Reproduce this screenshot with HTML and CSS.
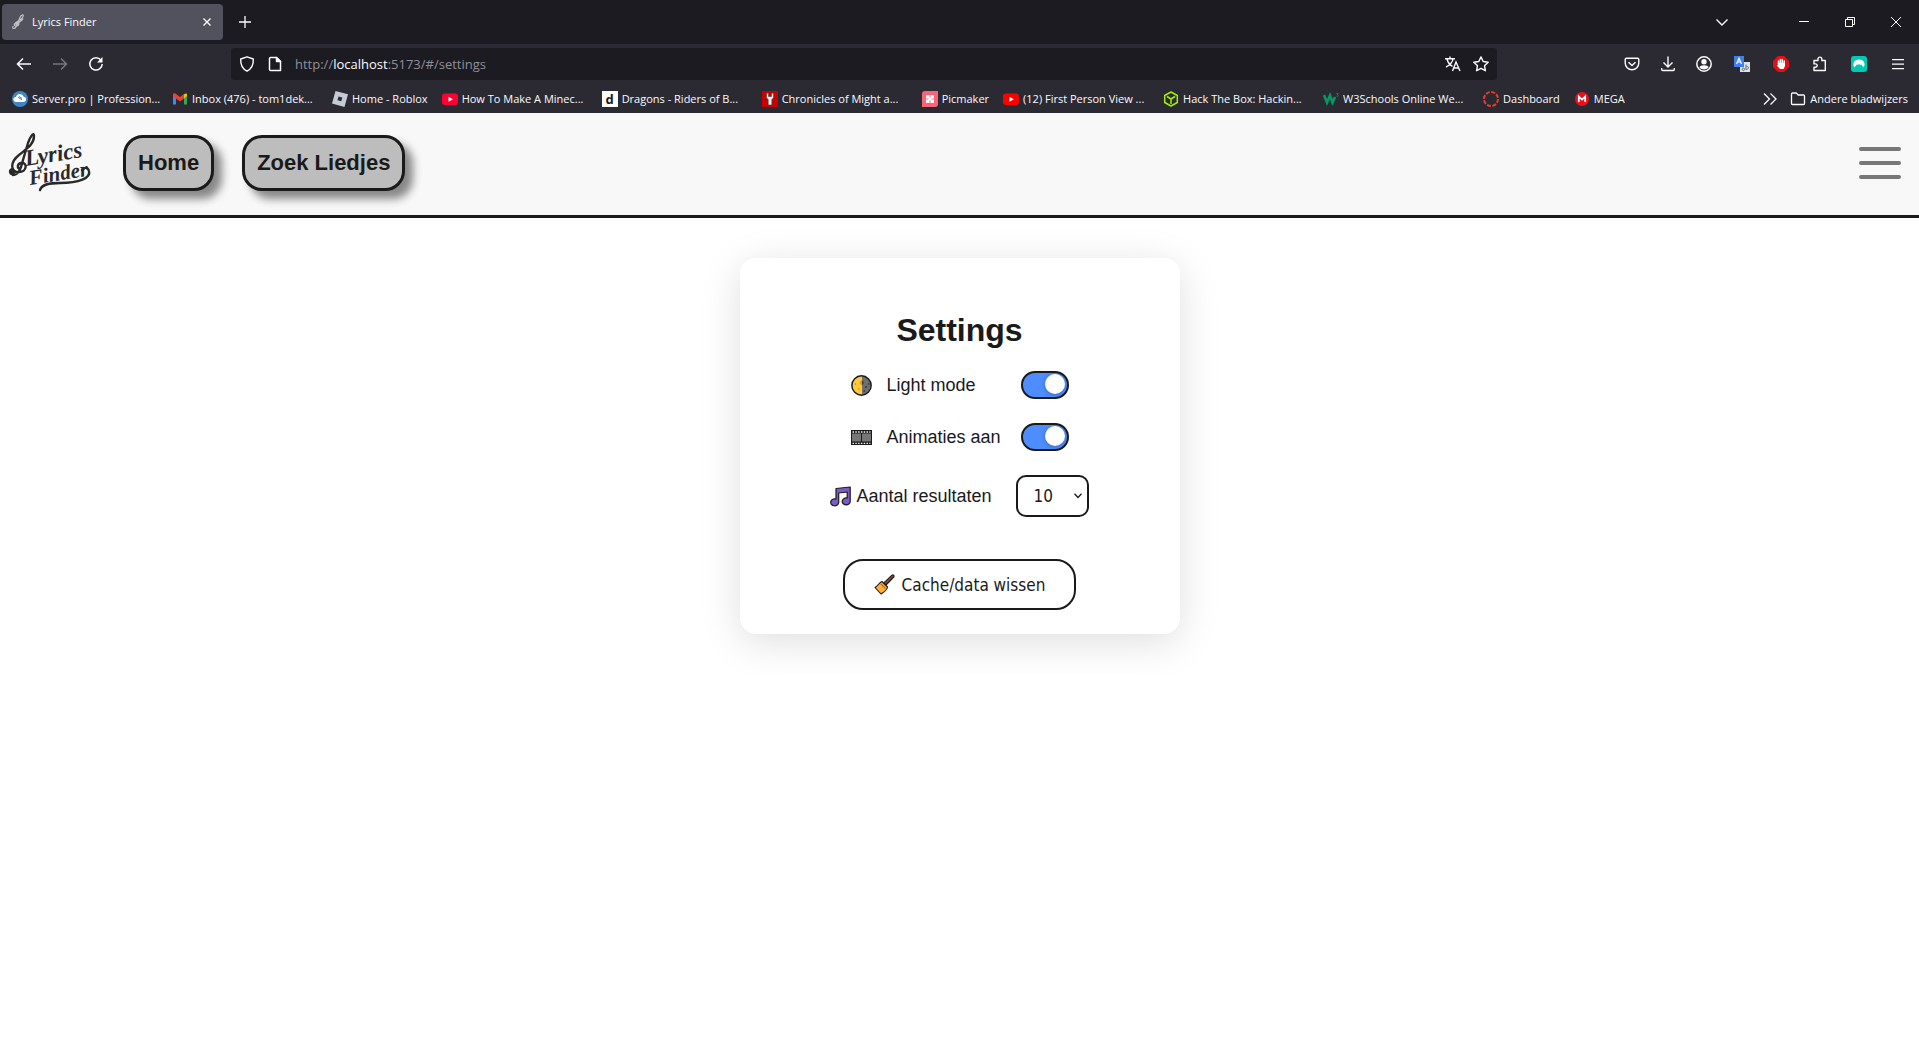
FILE: index.html
```html
<!DOCTYPE html>
<html lang="nl">
<head>
<meta charset="utf-8">
<meta name="viewport" content="width=device-width, initial-scale=1">
<title>Lyrics Finder</title>
<link rel="stylesheet" href="styles.css">
</head>
<body>
<div class="browser">
  <div class="tabbar">
    <div class="tab">
      <svg width="16" height="16" viewBox="0 0 16 16" fill="none" stroke="#c4c4c8" stroke-width="1.2"><path d="M3 14.500c-1.500 0-1.800-1.800-.5-2.200M3 14.500c2-.3 2.500-2 3.500-5L9 3.500c1-2.500 3.500-3.500 3.200-1.500C12 4 9 6 6.500 7.500 3 9.500 2.500 11.500 4.500 12c3 .5 4.500-3 2.500-3.500S4 11 6 11M12 4.500C11 7 8 8 7 9"/></svg>
      <span class="tab-title">Lyrics Finder</span>
      <button class="icon-btn tab-close" aria-label="Tabblad sluiten"><svg width="10" height="10" viewBox="0 0 10 10" stroke="#fbfbfe" stroke-width="1.400"><path d="M1.500 1.500l7 7M8.500 1.500l-7 7"/></svg></button>
    </div>
    <button class="icon-btn new-tab" aria-label="Nieuw tabblad"><svg width="14" height="14" viewBox="0 0 14 14" stroke="#fbfbfe" stroke-width="1.300"><path d="M7 1v12M1 7h12"/></svg></button>
    <div class="window-controls">
      <button class="icon-btn all-tabs" aria-label="Alle tabbladen"><svg width="14" height="14" viewBox="0 0 14 14" fill="none" stroke="#fbfbfe" stroke-width="1.400"><path d="M1.500 4.500L7 10l5.500-5.500"/></svg></button>
      <button class="icon-btn win" aria-label="Minimaliseren"><svg width="10" height="10" viewBox="0 0 10 10"><path d="M0 4h10v1H0z" fill="#fff"/></svg></button>
      <button class="icon-btn win" aria-label="Verkleinen"><svg width="10" height="10" viewBox="0 0 10 10" fill="none" stroke="#fff"><path d="M.5 2.500h7v7h-7zM2.500 2.500v-2h7v7h-2"/></svg></button>
      <button class="icon-btn win" aria-label="Sluiten"><svg width="10" height="10" viewBox="0 0 10 10" stroke="#fff"><path d="M0 0l10 10M10 0L0 10"/></svg></button>
    </div>
  </div>

  <div class="toolbar">
    <div class="nav-buttons">
      <button class="icon-btn tool" aria-label="Terug"><svg width="16" height="16" viewBox="0 0 16 16" fill="none" stroke="#fbfbfe" stroke-width="1.500"><path d="M15 8H1.500M7 2.500L1.500 8 7 13.500"/></svg></button>
      <button class="icon-btn tool" aria-label="Vooruit"><svg width="16" height="16" viewBox="0 0 16 16" fill="none" stroke="#77767d" stroke-width="1.500"><path d="M1 8h13.500M9 2.500L14.500 8 9 13.500"/></svg></button>
      <button class="icon-btn tool" aria-label="Vernieuwen"><svg width="16" height="16" viewBox="0 0 16 16" fill="none" stroke="#fbfbfe" stroke-width="1.500"><path d="M13 4.200A6.200 6.200 0 1 0 14.200 8"/><path d="M14.500 1v5.500H9z" fill="#fbfbfe" stroke="none"/></svg></button>
    </div>
    <div class="urlbar">
      <svg width="16" height="16" viewBox="0 0 16 16" fill="none" stroke="#fbfbfe" stroke-width="1.400" stroke-linejoin="round"><path d="M8 .8l6.300 2.200c.3 5.500-1.600 9.700-6.300 12.200C3.300 12.700 1.400 8.500 1.700 3z"/></svg>
      <svg width="16" height="16" viewBox="0 0 16 16" fill="none" stroke="#fbfbfe" stroke-width="1.500" stroke-linejoin="round"><path d="M3.500 1.500h6l4 4v9h-10a1 1 0 0 1-1-1v-11a1 1 0 0 1 1-1z"/><path d="M9.500 1.500v4h4z" fill="#fbfbfe"/></svg>
      <span class="url">http://<b>localhost</b>:5173/#/settings</span>
      <svg width="16" height="16" viewBox="0 0 16 16" fill="none" stroke="#fbfbfe" stroke-width="1.400"><path d="M0 2.700h10M5 .5v2.200M1 11c4-2 6.500-4.500 7-8M2 3c1 4 3 6 5.500 7.300M7.500 15l3.500-9 4 9M8.800 12h5"/></svg>
      <svg width="16" height="16" viewBox="0 0 16 16" fill="none" stroke="#fbfbfe" stroke-width="1.400" stroke-linejoin="round"><path d="M8 .9l2.200 4.600 5 .7-3.700 3.500.9 5L8 12.300l-4.400 2.400.9-5L.8 6.200l5-.7z"/></svg>
    </div>
    <div class="tool-buttons">
      <button class="icon-btn tool" aria-label="Pocket"><svg width="16" height="16" viewBox="0 0 16 16" fill="none" stroke="#fbfbfe" stroke-width="1.400" stroke-linejoin="round"><path d="M2.500 2.200h11a1.300 1.300 0 0 1 1.300 1.300V7a6.800 6.800 0 0 1-13.600 0V3.500a1.300 1.300 0 0 1 1.300-1.300z"/><path d="M4.500 6.200L8 9.500l3.500-3.300"/></svg></button>
      <button class="icon-btn tool" aria-label="Downloads"><svg width="16" height="16" viewBox="0 0 16 16" fill="none" stroke="#fbfbfe" stroke-width="1.400"><path d="M8 .5V11M3.500 6.500L8 11l4.500-4.500M1.700 12v1.500a1 1 0 0 0 1 1h10.600a1 1 0 0 0 1-1V12"/></svg></button>
      <button class="icon-btn tool" aria-label="Account"><svg width="16" height="16" viewBox="0 0 16 16" fill="none" stroke="#fbfbfe" stroke-width="1.500"><circle cx="8" cy="8" r="7.200"/><circle cx="8" cy="5.800" r="2.700" fill="#fbfbfe" stroke="none"/><path d="M3.500 11.500c0-3 9-3 9 0-2 2.500-7 2.500-9 0z" fill="#fbfbfe" stroke="none"/></svg></button>
      <button class="icon-btn ext" aria-label="Vertalen"><svg width="16" height="16" viewBox="0 0 16 16"><path d="M6 6h10v10H6z" fill="#dfe3e6"/><path d="M0 0h10v11H0z" fill="#3f80ee"/><path d="M2.500 8L5 2.200 7.500 8M3.500 6h3" stroke="#fff" stroke-width="1.200" fill="none"/><path d="M8 13.500c0-2 3-2 2.500 0s-2.500 1-2 0M12 8.500v5.500M12 10.500c3-1 3 3 .5 3" stroke="#61717b" fill="none"/></svg></button>
      <button class="icon-btn ext" aria-label="AdBlock"><svg width="16" height="16" viewBox="0 0 16 16"><path d="M5 0h6l5 5v6l-5 5H5l-5-5V5z" fill="#e80c14"/><path d="M5.500 8V5m1.900 3V3.500m1.900 4.500V3.500m1.900 5V5" stroke="#fff" stroke-width="1.500" stroke-linecap="round"/><path d="M4.800 7H12v3l-1.500 3H7l-3.200-3.500 1-.5z" fill="#fff"/></svg></button>
      <button class="icon-btn ext" aria-label="Extensies"><svg width="16" height="16" viewBox="0 0 16 16" fill="none" stroke="#fbfbfe" stroke-width="1.400" stroke-linejoin="round"><path d="M2 4.500h4V3a1.900 1.900 0 0 1 3.800 0v1.500h3.500v10H2v-3.200h1.500a1.700 1.700 0 0 0 0-3.400H2z"/></svg></button>
      <button class="icon-btn ext" aria-label="NordVPN"><svg width="16" height="16" viewBox="0 0 16 16"><rect width="16" height="16" rx="3" fill="#00c9b4"/><path d="M3.300 11.500C.8 7 4 3.500 8 3.500s7.200 3.500 4.700 8L10 8.200l-.8 1L8 7.800l-1.200 1.400-.8-1z" fill="#fff"/></svg></button>
      <button class="icon-btn ext" aria-label="Menu"><svg width="14" height="14" viewBox="0 0 14 14"><path d="M1 2h12v1.300H1zM1 6.400h12v1.300H1zM1 11h12v1.300H1z" fill="#fbfbfe"/></svg></button>
    </div>
  </div>

  <nav class="bookmarks" aria-label="Bladwijzers">
    <a class="bookmark long" href="#"><svg width="16" height="16" viewBox="0 0 16 16"><circle cx="8" cy="8" r="8" fill="#3d86c8"/><path d="M4 11a2.500 2.500 0 0 1-.2-5 4.300 4.300 0 0 1 8-.3A2.700 2.700 0 0 1 12 11z" fill="#fff"/><path d="M6 6l4 3M7 5.500l3 2" stroke="#3d86c8"/></svg>Server.pro | Profession...</a>
    <a class="bookmark long" href="#"><svg width="16" height="16" viewBox="0 0 16 16"><path d="M1 4v9.500h3V6z" fill="#4285f4"/><path d="M12 6v7.500h3V4z" fill="#34a853"/><path d="M12 3.500v4L15 5V3.500c0-1.500-2-1.500-3 0z" fill="#fbbc04"/><path d="M1 3.500C1 2 3 2 4 3l4 3 4-3v4.500l-4 3-4-3L1 5.300z" fill="#ea4335"/></svg>Inbox (476) - tom1dek...</a>
    <a class="bookmark" href="#"><svg width="16" height="16" viewBox="0 0 16 16"><path d="M3.500 0L16 3.300 12.500 16 0 12.600z" fill="#c5cbd2"/><path d="M6.500 5.500l3.800 1-1 3.800-3.800-1z" fill="#2b2a33"/></svg>Home - Roblox</a>
    <a class="bookmark long" href="#"><svg width="16" height="16" viewBox="0 0 16 16"><rect y="2.500" width="16" height="11.500" rx="3" fill="#ff0033"/><path d="M6.500 5.800v5L10.800 8.300z" fill="#fff"/></svg>How To Make A Minec...</a>
    <a class="bookmark long" href="#"><span class="d-icon">d</span>Dragons - Riders of B...</a>
    <a class="bookmark long" href="#"><svg width="16" height="16" viewBox="0 0 16 16"><path d="M0 0h16v16H0z" fill="#c80000"/><path d="M4.500 2.500L6.500 2v3.500h3V2l2 .5v4.300L9.800 8.500V14H6.200V8.500L4.500 6.800z" fill="#f2f2f2" stroke="#333" stroke-width=".5"/></svg>Chronicles of Might a...</a>
    <a class="bookmark" href="#"><svg width="16" height="16" viewBox="0 0 16 16"><path d="M3 0h13v13a3 3 0 0 1-3 3H0V3a3 3 0 0 1 3-3z" fill="#fa6478"/><path d="M4 4h3.500v3.500H4zm4.500 0H12v3.500H8.500zM4 8.500h3.500V12H4zm4.500 0H12V12H8.500zM6.500 6.500h3v3h-3z" fill="#fff"/></svg>Picmaker</a>
    <a class="bookmark long" href="#"><svg width="16" height="16" viewBox="0 0 16 16"><rect y="2.500" width="16" height="11.500" rx="3" fill="#ff0000"/><path d="M6.500 5.800v5L10.800 8.300z" fill="#fff"/></svg>(12) First Person View ...</a>
    <a class="bookmark long" href="#"><svg width="16" height="16" viewBox="0 0 16 16" fill="none" stroke="#9fef00" stroke-width="1.500" stroke-linejoin="round"><path d="M8 1l6.300 3.500v7L8 15l-6.300-3.500v-7zM4 5.500L8 8l4-2.500M8 8v5"/></svg>Hack The Box: Hackin...</a>
    <a class="bookmark long" href="#"><svg width="16" height="16" viewBox="0 0 16 16" fill="none" stroke="#059862"><path d="M1 4l3 7.500L7 4.500l2.500 7L12 6" stroke-width="2.600"/><path d="M13.300 2.500h2l-1 1.300c1.500 0 1.200 2-.8 1.500" stroke-width=".8"/></svg>W3Schools Online We...</a>
    <a class="bookmark" href="#"><svg width="16" height="16" viewBox="0 0 16 16" fill="none" stroke="#e63d2e"><circle cx="8" cy="8" r="7" stroke-width="2" stroke-dasharray="4 1.500"/></svg>Dashboard</a>
    <a class="bookmark" href="#"><svg width="16" height="16" viewBox="0 0 16 16"><circle cx="8" cy="8" r="7" fill="#e8121c"/><path d="M4.800 11V5.500L8 8.500l3.200-3V11" stroke="#fff" stroke-width="1.700" fill="none"/></svg>MEGA</a>
    <button class="icon-btn overflow" aria-label="Meer bladwijzers"><svg width="14" height="14" viewBox="0 0 14 14" fill="none" stroke="#fbfbfe" stroke-width="1.300"><path d="M1 1.500L6.500 7 1 12.500M7.500 1.500L13 7l-5.500 5.500"/></svg></button>
    <a class="bookmark other" href="#"><svg width="16" height="16" viewBox="0 0 16 16" fill="none" stroke="#fbfbfe" stroke-width="1.300" stroke-linejoin="round"><path d="M1.500 3a1 1 0 0 1 1-1h3.700l2 2h5.300a1 1 0 0 1 1 1v7.500a1 1 0 0 1-1 1h-11a1 1 0 0 1-1-1z"/></svg>Andere bladwijzers</a>
  </nav>
</div>

<header class="site-header">
  <a class="logo" href="#" aria-label="Lyrics Finder">
    <svg width="84" height="62" viewBox="0 0 84 62">
      <g fill="none" stroke="#292929" stroke-linecap="round">
        <path d="M5 41c-2 1-3-2-1-3" stroke-width="4"/>
        <path d="M5 43c6 0 8-7 10-15l5-17C22 5 26-1 26 4c0 9-8 13-15 19-9 7-9 17 0 17 8 0 9-10 2-9-4 1-4 5-1 6" stroke-width="2.400"/>
        <path d="M32 58c2-6 10-7 20-7 19 0 31-5 29-12-1-4-5-4-7-1" stroke-width="2.400"/>
      </g>
      <g class="logo-text">
        <text x="18" y="34" transform="rotate(-9 18 34)">Lyrics</text>
        <text x="22" y="53" class="logo-small" transform="rotate(-9 22 53)">Finder</text>
      </g>
    </svg>
  </a>
  <nav class="site-nav">
    <a class="nav-link" href="#">Home</a>
    <a class="nav-link" href="#">Zoek Liedjes</a>
  </nav>
  <button class="menu-btn" aria-label="Menu openen"><svg width="42" height="34" viewBox="0 0 42 34" stroke="#777" stroke-width="4" stroke-linecap="round"><path d="M2 3h38M2 17h38M2 31h38"/></svg></button>
</header>

<main class="page">
  <section class="card">
    <h1 class="card-title">Settings</h1>
    <div class="setting">
      <svg class="emoji" width="21" height="21" viewBox="0 0 21 21"><circle cx="10.500" cy="10.500" r="9.500" fill="#6f6f6f"/><path d="M11 1a9.500 9.500 0 1 0 0 19z" fill="#ffc83d"/><path d="M11 5.500a2.500 2.500 0 0 0-2 4l2 .5z" fill="#e39d19"/><path d="M11 5.500a2.300 2.300 0 0 1 0 4.500zM14 11h2v2h-2zM17 8h1.500v2H17zM12.500 15h1.500v2h-1.500z" fill="#444"/><path d="M3.500 8h1.500v2H3.500zM7 13h2v1.500H7z" fill="#e39d19"/><circle cx="10.500" cy="10.500" r="9.700" fill="none" stroke="#1a1a1a" stroke-width="1.400"/></svg>
      <label class="setting-label" for="light">Light mode</label>
      <input class="switch" type="checkbox" id="light" checked>
    </div>
    <div class="setting">
      <svg class="emoji" width="21" height="21" viewBox="0 0 21 21"><path d="M0 3h21v15H0z" fill="#1a1a1a"/><path d="M1 6.500h9v8H1zM11 6.500h9v8h-9z" fill="#777"/><path d="M1.500 5h18M1.500 16.300h18" stroke="#f2f2f2" stroke-width="1.300" stroke-dasharray="1.500 1.300"/></svg>
      <label class="setting-label" for="anim">Animaties aan</label>
      <input class="switch" type="checkbox" id="anim" checked>
    </div>
    <div class="results">
      <label class="results-label" for="count"><svg class="emoji" width="21" height="21" viewBox="0 0 21 21" fill="#7a5bc7" stroke="#1a1a1a" stroke-width="1.200" stroke-linejoin="round"><path d="M6 2.500L20.200 1v14.500a4 3.500 0 1 1-3-3.500V6L8.700 7v9.500A4 3.500 0 1 1 6 13z"/></svg>Aantal resultaten</label>
      <div class="select-box">
        <select class="count" id="count"><option>5</option><option selected>10</option><option>20</option></select>
        <svg class="select-arrow" width="8" height="6" viewBox="0 0 8 6" fill="none" stroke="#1a1a1a" stroke-width="1.300"><path d="M.5 .8L4 4.500 7.500 .8"/></svg>
      </div>
    </div>
    <button class="clear-btn"><svg width="21" height="21" viewBox="0 0 21 21" stroke="#1a1a1a" stroke-width="1.100" stroke-linejoin="round"><path d="M18 1.200c1.500-.8 2.500.5 1.800 1.800L12 11 9.800 8.800z" fill="#8e4a35"/><path d="M8 7.500l5.500 5.500c-.5 3.500-3.500 5-6.500 7L1 13.500c3-1.500 4-5 7-6z" fill="#ffb02e"/><path d="M6.500 9.500l5 5" stroke="#c9622a"/></svg>Cache/data wissen</button>
  </section>
</main>
</body>
</html>
```
FILE: styles.css
```css
* { box-sizing: border-box; }

body {
  margin: 0;
  background: #fff;
  color: #1a1a1a;
  font-family: "Liberation Sans", Arial, sans-serif;
}

button { font: inherit; color: inherit; }
svg { flex: none; display: block; }

/* Browser window */
.browser {
  background: #2b2a33;
  color: #fbfbfe;
  font: 11px/16px "Open Sans", "Segoe UI", sans-serif;
}

.icon-btn {
  display: flex;
  align-items: center;
  justify-content: center;
  flex: none;
  padding: 0;
  border: 0;
  background: none;
}

.tabbar {
  display: flex;
  align-items: center;
  height: 44px;
  padding-left: 2px;
  background: #1c1b22;
}

.tab {
  display: flex;
  align-items: center;
  gap: 5px;
  width: 221px;
  height: 36px;
  padding: 0 8px 0 9px;
  border-radius: 4px;
  background: #52525e;
}

.tab-title { flex: 1; }
.tab-close { width: 16px; height: 16px; }
.new-tab { width: 44px; height: 36px; }
.window-controls { display: flex; margin-left: auto; }
.all-tabs { width: 36px; height: 44px; margin-right: 41px; }
.win { width: 46px; height: 44px; }

.toolbar {
  display: flex;
  align-items: center;
  gap: 117px;
  height: 40px;
  padding: 0 2px 0 6px;
}

.nav-buttons,
.tool-buttons { display: flex; }
.tool { width: 36px; height: 32px; }
.ext { width: 39px; height: 32px; }

.urlbar {
  display: flex;
  flex: 1;
  align-items: center;
  gap: 12px;
  min-width: 0;
  height: 32px;
  padding: 0 8px;
  border-radius: 4px;
  background: #1c1b22;
}

.url {
  flex: 1;
  color: #8f8f98;
  font-size: 13px;
}

.url b { color: #fbfbfe; font-weight: 400; }

.bookmarks {
  display: flex;
  align-items: center;
  height: 29px;
  padding: 0 11px 0 12px;
}

.bookmark {
  display: flex;
  flex: none;
  align-items: center;
  gap: 4px;
  padding-right: 14px;
  color: inherit;
  text-decoration: none;
  white-space: nowrap;
}

.bookmark.long { width: 160px; padding-right: 0; }
.bookmark.other { padding-right: 0; }
.overflow { width: 28px; margin: 0 6px 0 auto; }

.d-icon {
  width: 16px;
  background: #fff;
  color: #1a1a1a;
  font-size: 13px;
  font-weight: 700;
  text-align: center;
}

/* Site header */
.site-header {
  display: flex;
  align-items: center;
  padding: 19px 18px 21px 8px;
  border-bottom: 3px solid #1a1a1a;
  background: #f8f8f8;
}

.logo { margin-right: 31px; }

.logo-text {
  fill: #292929;
  font: italic 700 23px "Liberation Serif", serif;
}

.logo-small { font-size: 21px; }

.site-nav { display: flex; gap: 28px; }

.nav-link {
  padding: 12px;
  border: 3px solid #1a1a1a;
  border-radius: 20px;
  background: #bdbdbd;
  box-shadow: 8px 8px 8px #888;
  color: inherit;
  font-size: 22px;
  font-weight: 700;
  line-height: 26px;
  text-decoration: none;
}

.menu-btn {
  margin-left: auto;
  padding: 0;
  border: 0;
  background: none;
}

/* Settings */
.page { padding: 40px 16px; }

.card {
  display: flex;
  flex-direction: column;
  align-items: center;
  max-width: 440px;
  margin: 0 auto;
  padding: 52px 32px 24px;
  border-radius: 16px;
  background: #fff;
  box-shadow: 0 8px 40px rgba(0, 0, 0, 0.13);
  font-size: 18px;
}

.card-title {
  margin: 0 0 21px;
  font-size: 32px;
  line-height: 40px;
}

.setting {
  display: grid;
  grid-template-columns: 21px 119px 48px;
  gap: 15px;
  align-items: center;
  margin-bottom: 24px;
}

.switch {
  width: 48px;
  height: 28px;
  margin: 0;
  padding: 1px 2px;
  border: 2px solid #1a1a1a;
  border-radius: 14px;
  background: #4d8dff;
  appearance: none;
}

.switch::before {
  content: "";
  display: block;
  width: 20px;
  height: 20px;
  border-radius: 50%;
  background: #fff;
  box-shadow: 0 1px 4px rgba(0, 0, 0, 0.25);
}

.switch:checked::before { margin-left: auto; }

.results {
  display: flex;
  align-items: center;
  gap: 24px;
  margin-bottom: 42px;
}

.results-label { display: flex; align-items: center; gap: 5px; }

.select-box { position: relative; }

.count {
  display: block;
  width: 73px;
  height: 42px;
  padding: 0 16px;
  border: 2px solid #1a1a1a;
  border-radius: 10px;
  background: #fff;
  color: inherit;
  font: 17px "DejaVu Sans Condensed", "DejaVu Sans", Tahoma, sans-serif;
  appearance: none;
}

.select-arrow {
  position: absolute;
  top: 18px;
  right: 7px;
  pointer-events: none;
}

.clear-btn {
  display: flex;
  align-items: center;
  justify-content: center;
  gap: 7px;
  height: 51px;
  padding: 0 29px;
  border: 2px solid #1a1a1a;
  border-radius: 20px;
  background: #fff;
  font: 17px "DejaVu Sans Condensed", "DejaVu Sans", Tahoma, sans-serif;
}
```
